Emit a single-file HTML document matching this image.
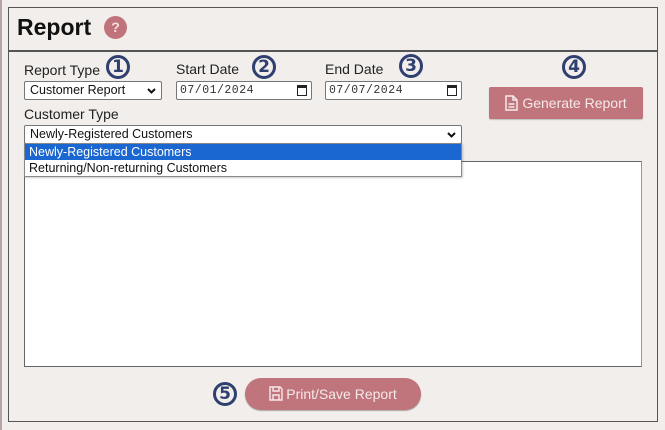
<!DOCTYPE html>
<html><head><style>
*{box-sizing:border-box}
body{margin:0;width:665px;height:430px;background:#f1eeeb;font-family:"Liberation Sans",Arial,sans-serif;position:relative;overflow:hidden}
.a{position:absolute}
.edge{left:0;top:0;width:2px;height:430px;background:#b9a3ab}
.panel{left:8px;top:7px;width:650px;height:415px;border:1.5px solid #555}
.hdr{left:8px;top:50px;width:650px;height:1.5px;background:#555}
.lbl{font-size:14px;color:#222}
.num{width:24px;height:24px;border:3px solid #2e3f70;border-radius:50%;color:#2e3f70;font-weight:bold;font-size:17px;text-align:center;line-height:18px;font-family:"DejaVu Sans",sans-serif}
.inp{background:#fff;border:1px solid #767676;border-radius:2px;font-size:12.5px;color:#111;height:19px;line-height:17px;padding-left:5px}
.date{font-family:"Liberation Mono",monospace;font-size:11.5px;letter-spacing:0.5px;color:#333;padding-left:3px}
.btn{background:#c0747c;color:#f6e9ea;font-size:14px;text-align:center}
.chev{position:absolute;right:5px;top:6px}
</style></head><body>
<div class="a edge"></div>
<div class="a panel"></div>
<div class="a hdr"></div>
<div class="a" style="left:17px;top:14px;font-size:23px;font-weight:bold;color:#111">Report</div>
<div class="a" style="left:104px;top:16px;width:23px;height:23px;border-radius:50%;background:#c0737b;color:#f4dfe1;font-weight:bold;font-size:14px;text-align:center;line-height:23px">?</div>

<div class="a lbl" style="left:24px;top:62px">Report Type</div>
<div class="a num" style="left:106px;top:55px">1</div>
<div class="a inp" style="left:24px;top:81px;width:138px">Customer Report<svg class="chev" width="9" height="6" viewBox="0 0 9 6"><path d="M1 1l3.5 3.5L8 1" fill="none" stroke="#111" stroke-width="2"/></svg></div>

<div class="a lbl" style="left:176px;top:61px">Start Date</div>
<div class="a num" style="left:252px;top:55px">2</div>
<div class="a inp date" style="left:176px;top:81px;width:136px">07/01/2024<span style="position:absolute;right:4px;top:3px;width:10px;height:11px;border:1.5px solid #222;border-top-width:3px"></span></div>

<div class="a lbl" style="left:325px;top:61px">End Date</div>
<div class="a num" style="left:399px;top:54px">3</div>
<div class="a inp date" style="left:325px;top:81px;width:137px">07/07/2024<span style="position:absolute;right:4px;top:3px;width:10px;height:11px;border:1.5px solid #222;border-top-width:3px"></span></div>

<div class="a num" style="left:562px;top:55px">4</div>
<div class="a btn" style="left:489px;top:87px;width:154px;height:32px;border-radius:2px;line-height:32px;box-shadow:0 1px 1px rgba(0,0,0,.2)">
<svg width="13" height="16" viewBox="0 0 13 16" style="vertical-align:-3px;margin-right:4px"><path d="M1 1h7l4 4v10H1z M8 1v4h4 M3.5 9h6 M3.5 12h6" fill="none" stroke="#f6e9ea" stroke-width="1.5"/></svg>Generate Report</div>

<div class="a lbl" style="left:24px;top:106px">Customer Type</div>
<div class="a" style="left:24px;top:161px;width:618px;height:206px;background:#fff;border:1.5px solid #666;border-right-color:#999;border-bottom-color:#666"></div>
<div class="a inp" style="left:24px;top:125px;width:438px">Newly-Registered Customers<svg class="chev" width="9" height="6" viewBox="0 0 9 6"><path d="M1 1l3.5 3.5L8 1" fill="none" stroke="#111" stroke-width="2"/></svg></div>
<div class="a" style="left:24px;top:143px;width:438px;height:34px;background:#fff;border:1px solid #888;font-size:12.5px;box-shadow:1px 1px 2px rgba(0,0,0,.2)">
<div style="background:#1a67d2;color:#fff;height:16px;line-height:16px;padding-left:4px">Newly-Registered Customers</div>
<div style="color:#111;height:16px;line-height:16px;padding-left:4px">Returning/Non-returning Customers</div>
</div>

<div class="a num" style="left:213px;top:382px">5</div>
<div class="a btn" style="left:245px;top:378px;width:176px;height:32px;border-radius:16px;line-height:32px;box-shadow:0 1px 1px rgba(0,0,0,.3)">
<svg width="14" height="15" viewBox="0 0 14 15" style="vertical-align:-2px;margin-right:3px"><path d="M1 1h10l2 2v11H1z M4 1v4h6V1 M4 14V9h6v5" fill="none" stroke="#f6e9ea" stroke-width="1.4"/></svg>Print/Save Report</div>
</body></html>
